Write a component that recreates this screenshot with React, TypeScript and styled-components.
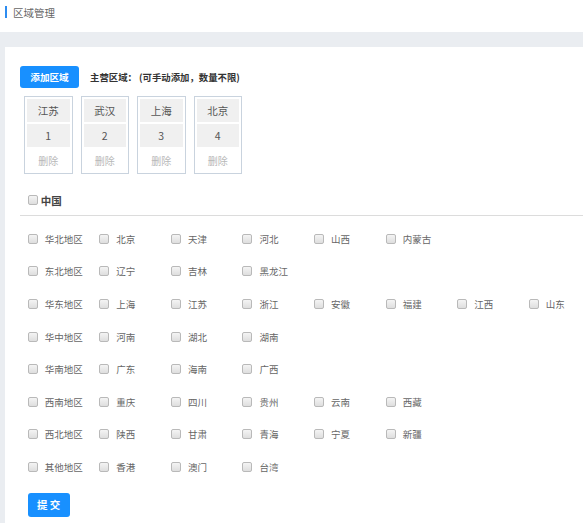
import React from "react";
import styled, { createGlobalStyle } from "styled-components";

const GlobalStyle = createGlobalStyle`
  html, body { margin: 0; padding: 0; }
  body {
    background: #eaedf1;
    font-family: "Noto Sans CJK SC", "Noto Sans", sans-serif;
    color: #555;
    overflow: hidden;
  }
`;

const Page = styled.div`
  width: 583px;
  height: 523px;
  display: flex;
  flex-direction: column;
`;

const Header = styled.div`
  height: 32px;
  background: #fff;
  display: flex;
  align-items: center;
  padding-left: 5px;
  box-sizing: border-box;
  padding-bottom: 8px;
`;

const HeaderBar = styled.span`
  width: 2px;
  height: 12px;
  background: #2d8cf0;
  margin-right: 6px;
`;

const HeaderTitle = styled.span`
  font-size: 10.5px;
  color: #666;
`;

const Panel = styled.div`
  flex: 1;
  margin: 15px 0 0 5px;
  background: #fff;
  padding: 19px 0 0 15px;
  box-sizing: border-box;
`;

const Toolbar = styled.div`
  display: flex;
  align-items: center;
  gap: 11px;
  height: 22px;
`;

const PrimaryButton = styled.button<{ $w: number; $h: number; $size: number }>`
  width: ${(p) => p.$w}px;
  height: ${(p) => p.$h}px;
  border: none;
  border-radius: 3px;
  background: #1890ff;
  color: #fff;
  font-family: inherit;
  font-size: ${(p) => p.$size}px;
  font-weight: 700;
  padding: 0;
  cursor: pointer;
  white-space: pre;
`;

const Hint = styled.span`
  font-size: 9.4px;
  font-weight: 700;
  color: #333;
`;

const Cards = styled.div`
  display: flex;
  gap: 8px;
  margin: 8px 0 0 4px;
`;

const Card = styled.div`
  width: 48.5px;
  border: 1px solid #c9d3de;
  padding: 2px;
  box-sizing: border-box;
  display: flex;
  flex-direction: column;
  gap: 2px;
`;

const Cell = styled.div`
  height: 23px;
  background: #f0f0f0;
  display: flex;
  align-items: center;
  justify-content: center;
  font-size: 10.5px;
  color: #555;
`;

const DeleteLink = styled.div`
  height: 22px;
  display: flex;
  align-items: center;
  justify-content: center;
  font-size: 10px;
  color: #b8b8b8;
  cursor: pointer;
`;

const ChinaHeader = styled.div`
  margin-top: 11px;
  height: 30px;
  border-bottom: 1px solid #dcdcdc;
  display: flex;
  align-items: center;
  padding-left: 7.7px;
  gap: 3px;
`;

const ChinaLabel = styled.span`
  font-size: 10.5px;
  font-weight: 700;
  color: #444;
`;

const Check = styled.input.attrs({ type: "checkbox" })`
  appearance: none;
  -webkit-appearance: none;
  margin: 0;
  width: 10px;
  height: 10px;
  border: 1px solid #b9b9b9;
  border-radius: 2px;
  background: linear-gradient(#f4f4f4, #dedede);
  box-sizing: border-box;
  flex: none;
`;

const Grid = styled.div`
  margin-top: 6.5px;
  padding-left: 7.7px;
  display: grid;
  grid-template-columns: repeat(8, 71.6px);
  grid-auto-rows: 32.6px;
`;

const Item = styled.label`
  display: flex;
  align-items: center;
  gap: 7px;
  font-size: 9.5px;
  color: #666;
  white-space: nowrap;
`;

const Footer = styled.div`
  margin-top: 7px;
  padding-left: 7.7px;
`;

const regions: string[][] = [
  ["华北地区", "北京", "天津", "河北", "山西", "内蒙古"],
  ["东北地区", "辽宁", "吉林", "黑龙江"],
  ["华东地区", "上海", "江苏", "浙江", "安徽", "福建", "江西", "山东"],
  ["华中地区", "河南", "湖北", "湖南"],
  ["华南地区", "广东", "海南", "广西"],
  ["西南地区", "重庆", "四川", "贵州", "云南", "西藏"],
  ["西北地区", "陕西", "甘肃", "青海", "宁夏", "新疆"],
  ["其他地区", "香港", "澳门", "台湾"],
];

const cards = [
  { name: "江苏", n: 1 },
  { name: "武汉", n: 2 },
  { name: "上海", n: 3 },
  { name: "北京", n: 4 },
];

export default function App() {
  return (
    <>
      <GlobalStyle />
      <Page>
        <Header>
          <HeaderBar />
          <HeaderTitle>区域管理</HeaderTitle>
        </Header>
        <Panel>
          <Toolbar>
            <PrimaryButton $w={59} $h={22} $size={9.6}>添加区域</PrimaryButton>
            <Hint>主营区域：&nbsp;(可手动添加，数量不限)</Hint>
          </Toolbar>
          <Cards>
            {cards.map((c) => (
              <Card key={c.n}>
                <Cell>{c.name}</Cell>
                <Cell>{c.n}</Cell>
                <DeleteLink>删除</DeleteLink>
              </Card>
            ))}
          </Cards>
          <ChinaHeader>
            <Check />
            <ChinaLabel>中国</ChinaLabel>
          </ChinaHeader>
          <Grid>
            {regions.map((row, ri) =>
              Array.from({ length: 8 }).map((_, ci) =>
                row[ci] ? (
                  <Item key={`${ri}-${ci}`}>
                    <Check />
                    {row[ci]}
                  </Item>
                ) : (
                  <span key={`${ri}-${ci}`} />
                )
              )
            )}
          </Grid>
          <Footer>
            <PrimaryButton $w={42} $h={24.5} $size={10.5}>{"提 交"}</PrimaryButton>
          </Footer>
        </Panel>
      </Page>
    </>
  );
}
